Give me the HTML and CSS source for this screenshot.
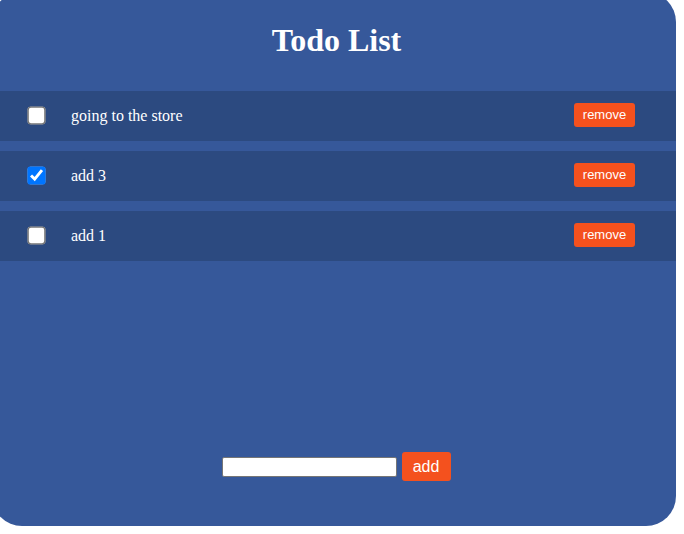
FILE: index.html
```html
<!DOCTYPE html>
<html>
<head>
<meta charset="utf-8">
<link rel="stylesheet" href="styles.css">
</head>
<body>
<div class="card">
  <h1 class="title">Todo List</h1>
  <ul class="list">
    <li class="item">
      <input type="checkbox" class="check">
      <span class="label">going to the store</span>
      <button class="remove">remove</button>
    </li>
    <li class="item">
      <input type="checkbox" class="check" checked>
      <span class="label">add 3</span>
      <button class="remove">remove</button>
    </li>
    <li class="item">
      <input type="checkbox" class="check">
      <span class="label">add 1</span>
      <button class="remove">remove</button>
    </li>
  </ul>
  <form class="add-form">
    <input type="text" class="new-input">
    <button type="button" class="add-btn">add</button>
  </form>
</div>
</body>
</html>
```

FILE: styles.css
```css
html, body {
  margin: 0;
  padding: 0;
  background: #ffffff;
  overflow: hidden;
}

.card {
  width: 684px;
  height: 534px;
  margin: -8px 0 0 -8px;
  background: #36589a;
  border-radius: 30px;
  display: flex;
  flex-direction: column;
  box-sizing: border-box;
  padding-top: 30px;
  font-family: "Liberation Serif", "Times New Roman", serif;
  color: #ffffff;
}

.title {
  margin: 0;
  height: 36px;
  line-height: 36px;
  font-size: 32px;
  font-weight: bold;
  text-align: center;
  padding-left: 5px;
}

.list {
  list-style: none;
  margin: 33px 0 0 0;
  padding: 0;
}

.item {
  height: 50px;
  margin-bottom: 10px;
  background: #2c4a80;
  display: flex;
  align-items: center;
  padding: 0 41px 0 38px;
  box-sizing: border-box;
}

.check {
  width: 13px;
  height: 13px;
  margin: 0 0 1px 0;
  transform: scale(1.4);
  flex: none;
}

.label {
  margin-left: 28px;
  font-size: 16px;
  flex: 1;
}

.remove {
  background: #f4511e;
  color: #ffffff;
  border: none;
  border-radius: 3px;
  font-family: "Liberation Sans", Arial, sans-serif;
  font-size: 13px;
  line-height: 16px;
  height: 24px;
  width: 61px;
  padding: 0;
  margin-bottom: 2px;
}

.add-form {
  margin-top: auto;
  margin-bottom: 44px;
  display: flex;
  align-items: center;
  justify-content: center;
  gap: 5px;
  padding-left: 4px;
}

.new-input {
  width: 175px;
  height: 20px;
  box-sizing: border-box;
  border: 1px solid #767676;
  border-radius: 2px;
  background: #ffffff;
  padding: 1px 2px;
  margin: 0;
}

.add-btn {
  background: #f4511e;
  color: #ffffff;
  border: none;
  border-radius: 3px;
  font-family: "Liberation Sans", Arial, sans-serif;
  font-size: 16px;
  width: 49px;
  height: 29px;
  padding: 0;
  margin-bottom: 1px;
}
```
